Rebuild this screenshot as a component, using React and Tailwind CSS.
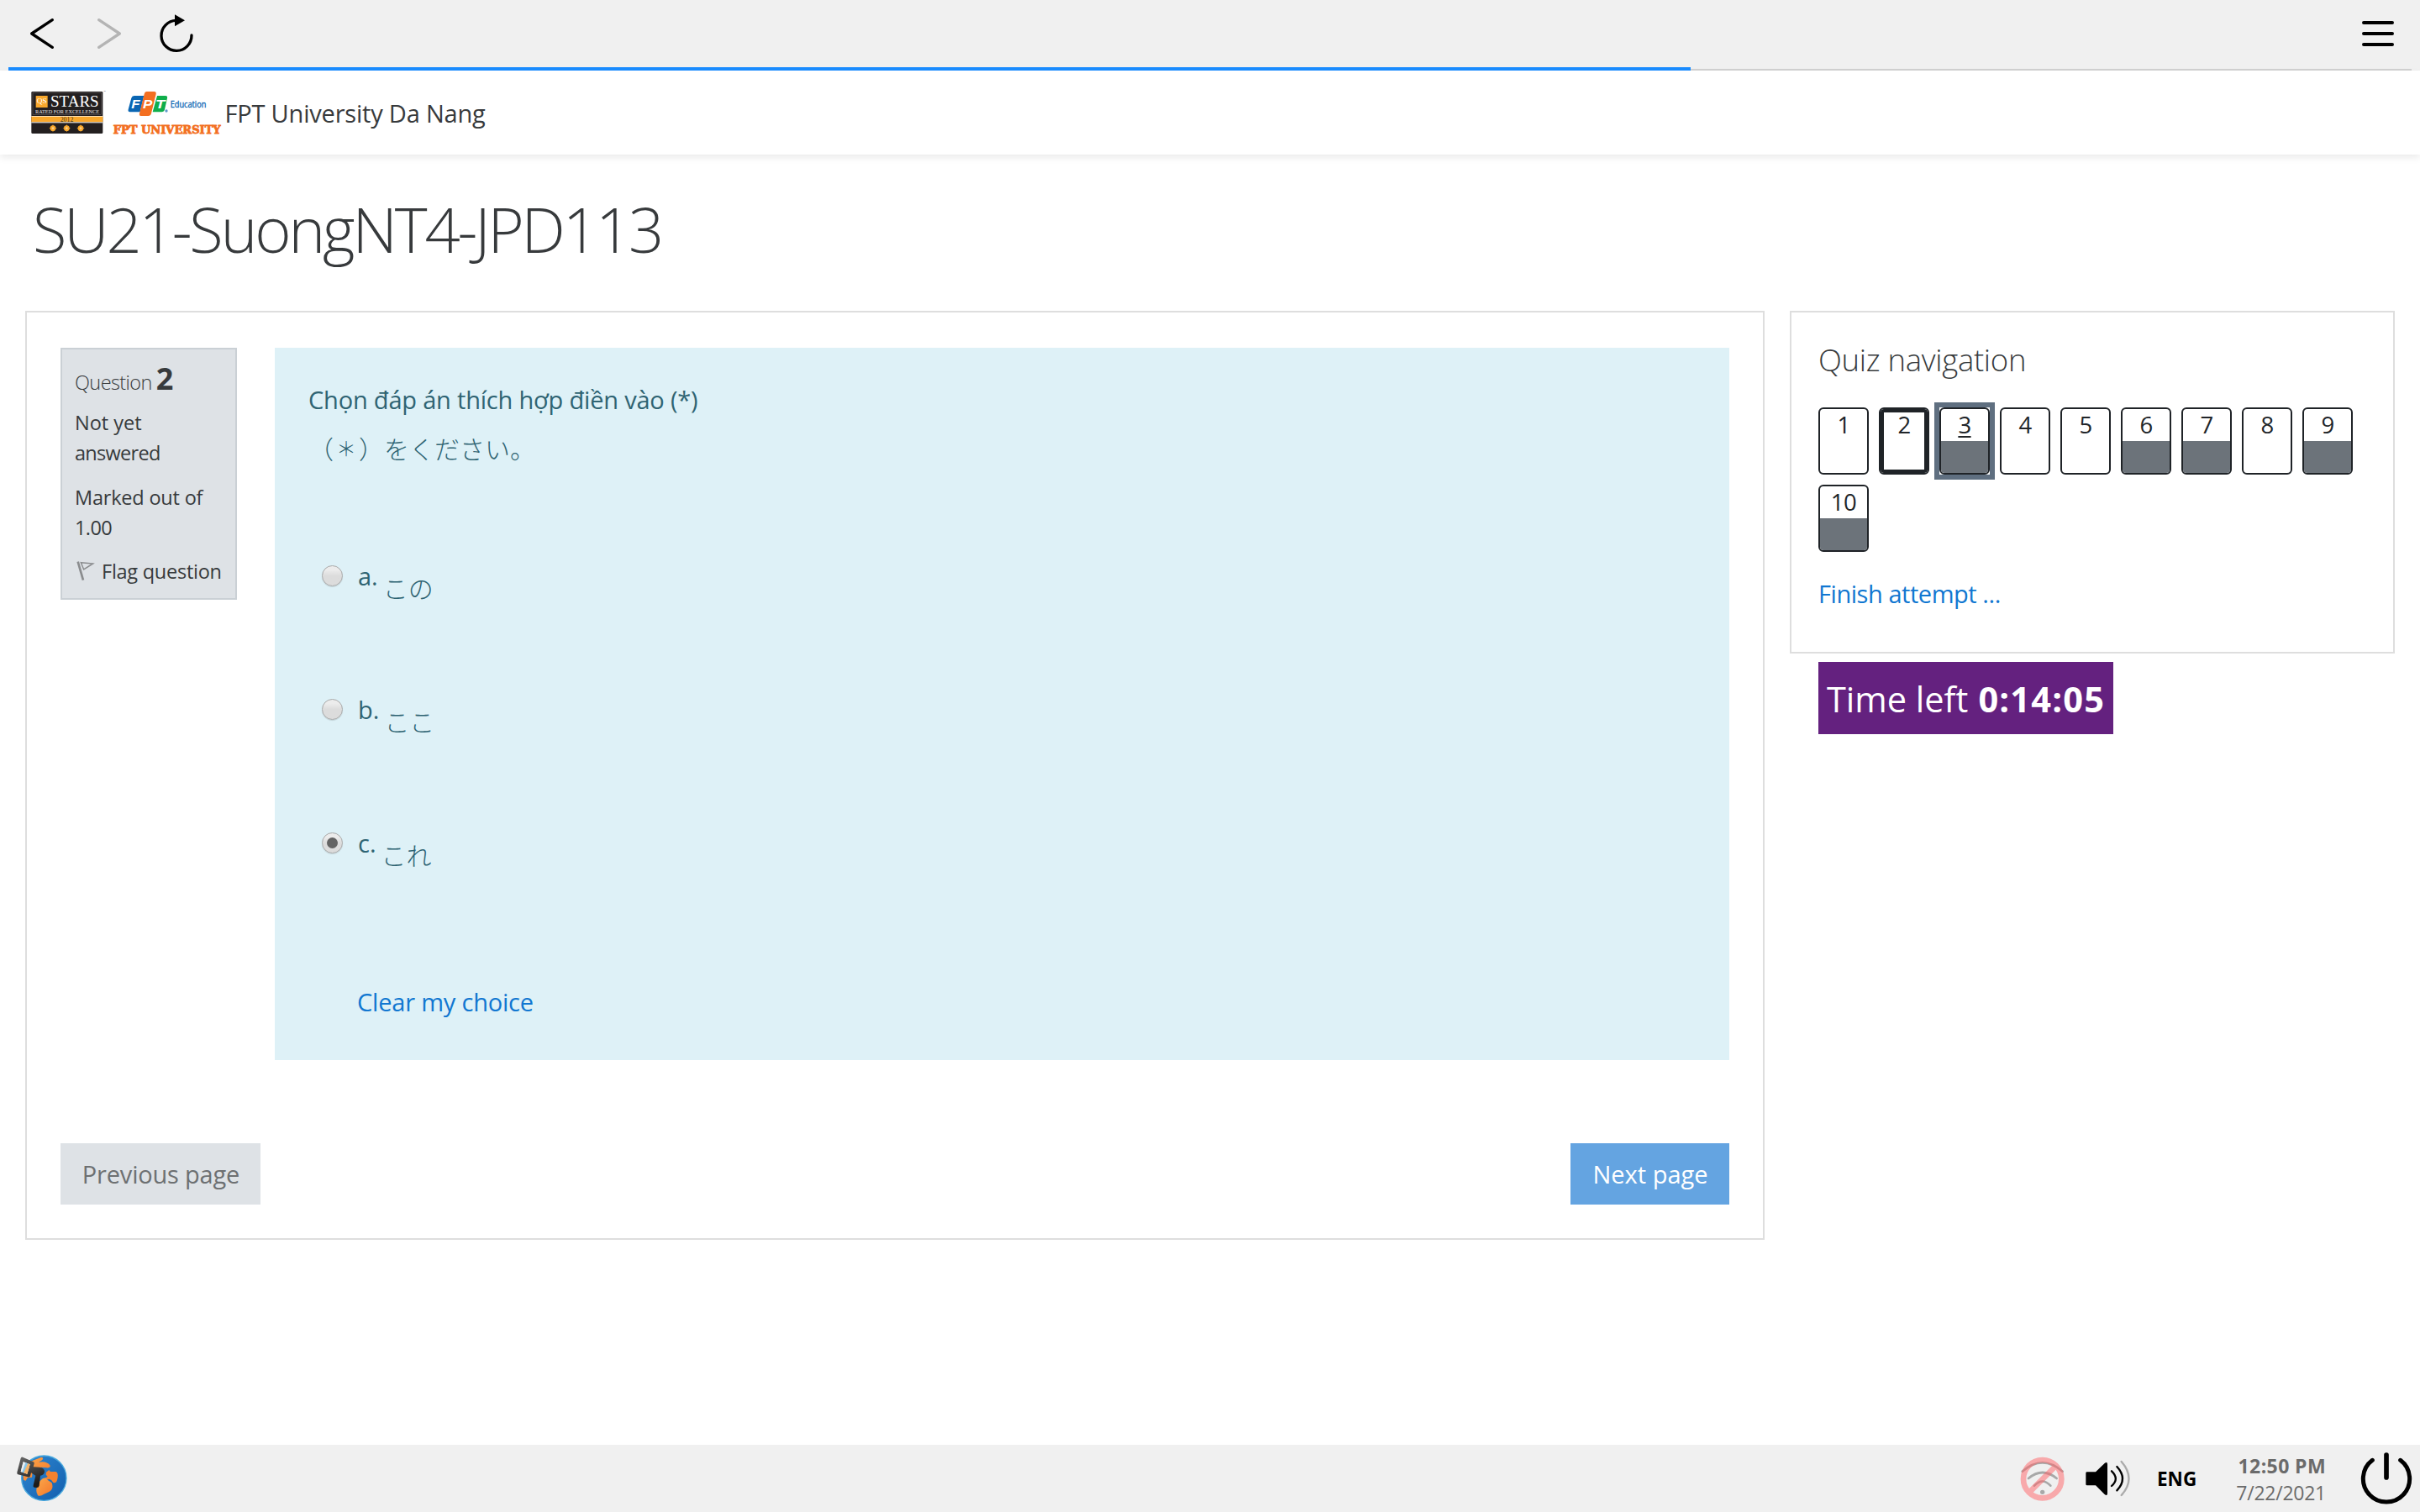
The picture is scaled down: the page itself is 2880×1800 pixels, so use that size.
import React from "react";

const JP = "font-['Noto_Sans_CJK_JP','Open_Sans',sans-serif] font-light";

function BackForwardReload() {
  return (
    <svg width="230" height="84" viewBox="0 0 690 252" fill="none" strokeLinecap="round" strokeLinejoin="round">
      <path d="M127 71 53 120l74 49" stroke="#000" strokeWidth="10" />
      <path d="M293 71l74 49-74 49" stroke="#b4b4b4" strokeWidth="10" />
      <path d="M624 126A54 54 0 1 1 569 73" stroke="#000" strokeWidth="10" />
      <path d="M564 52v42l36-21z" fill="#000" />
    </svg>
  );
}

function MenuIcon() {
  return (
    <svg width="38" height="30" viewBox="0 0 38 30" stroke="#000" strokeWidth="4" strokeLinecap="round">
      <path d="M2 2h34M2 15h34M2 28h34" />
    </svg>
  );
}

function BrandLogo() {
  return (
    <svg width="236" height="80" viewBox="0 0 708 240" className="shrink-0 overflow-visible">
      <rect x="22" y="45" width="255" height="150" rx="4" fill="#231f20" />
      <rect x="27" y="50" width="245" height="77" fill="none" stroke="#77706e" strokeWidth="1.5" />
      <rect x="38" y="60" width="42" height="42" fill="#f9a82c" />
      <text x="41" y="87" fontSize="25" fill="#fff" textLength="36" lengthAdjust="spacingAndGlyphs" fontFamily="Liberation Serif, serif">QS</text>
      <text x="90" y="98" fontSize="54" fill="#fff" textLength="173" lengthAdjust="spacingAndGlyphs" fontFamily="Liberation Serif, serif">STARS</text>
      <text x="36" y="122" fontSize="20" fill="#e8e4e2" textLength="228" lengthAdjust="spacingAndGlyphs" fontFamily="Liberation Serif, serif">RATED FOR EXCELLENCE</text>
      <rect x="22" y="132" width="255" height="3" fill="#fff" />
      <rect x="22" y="134" width="255" height="20" fill="#f9a82c" />
      <text x="125" y="153" fontSize="24" fill="#4a3412" textLength="47" lengthAdjust="spacingAndGlyphs" fontFamily="Liberation Serif, serif">2012</text>
      <rect x="22" y="154" width="255" height="3" fill="#fff" />
      {[99, 148, 198].map((x) => (
        <g key={x} fill="#f9a82c">
          <circle cx={x} cy="176" r="10" />
          <path d={`M${x} 162l4 10 10 4-10 4-4 10-4-10-10-4 10-4z`} />
          <circle cx={x} cy="176" r="4" fill="#fbd08a" />
        </g>
      ))}
      <text x="279" y="49" fontSize="9" fill="#555" fontFamily="Liberation Sans, sans-serif">™</text>
      <path d="M389 60h35l-14 58h-36q-8 0-6-9l11-41q2-8 10-8z" fill="#0a66b3" />
      <path d="M471 60h30q8 0 6 9l-9 40q-2 9-11 9h-32z" fill="#0fae4b" />
      <path d="M434 45h26q9 0 7 9l-17 69q-2 9-11 9h-26q-7 0-5-9l17-69q2-9 9-9z" fill="#f36f21" />
      <g fill="#fff" fontFamily="Liberation Sans, sans-serif" fontWeight="700" fontStyle="italic" fontSize="44">
        <text x="379" y="105" textLength="31" lengthAdjust="spacingAndGlyphs">F</text>
        <text x="420" y="105" textLength="34" lengthAdjust="spacingAndGlyphs">P</text>
        <text x="465" y="105" textLength="34" lengthAdjust="spacingAndGlyphs">T</text>
      </g>
      <circle cx="504" cy="114" r="5" fill="#5f97cb" />
      <text x="518" y="103" fontSize="31" fill="#0a66b3" stroke="#0a66b3" strokeWidth="1" textLength="128" lengthAdjust="spacingAndGlyphs" fontFamily="Open Sans, sans-serif">Education</text>
      <text x="314" y="195" fontSize="40" fontWeight="700" fill="#f36f21" stroke="#f36f21" strokeWidth="2.5" textLength="384" lengthAdjust="spacingAndGlyphs" fontFamily="DejaVu Serif, serif">FPT UNIVERSITY</text>
    </svg>
  );
}

function FlagIcon() {
  return (
    <svg width="31" height="28" viewBox="54 82 93 84" fill="none" stroke="#8a8c8e" strokeWidth="5">
      <path d="M65 90l19 66" strokeWidth="8" />
      <path d="M76 93l43 4-33 21z" strokeWidth="4.5" />
    </svg>
  );
}

function GlobeIcon() {
  return (
    <svg width="60" height="80" viewBox="60 60 180 240">
      <defs>
        <linearGradient id="sea" x1="0" y1="0" x2="1" y2="1">
          <stop offset="0" stopColor="#2f86d0" />
          <stop offset="1" stopColor="#125fae" />
        </linearGradient>
        <linearGradient id="metal" x1="0" y1="0" x2=".4" y2="1">
          <stop offset="0" stopColor="#6b6b6b" />
          <stop offset="1" stopColor="#1c1c1c" />
        </linearGradient>
        <linearGradient id="land" x1="0" y1="0" x2="1" y2="1">
          <stop offset="0" stopColor="#fba94c" />
          <stop offset="1" stopColor="#f4772a" />
        </linearGradient>
      </defs>
      <circle cx="157" cy="179" r="80" fill="url(#sea)" stroke="#49a9de" strokeWidth="4" />
      <path d="M84 186c-4-24 4-48 24-66l36-14c10-3 12 4 6 9l-12 7c18-4 34 0 41 12 2 7-6 9-13 8l-20-2-16 12-14 6-2 18-16 2-6 10z" fill="url(#land)" />
      <path d="M165 158l10-8 5 6 20 0q8 4 6 20t-8 19q-8 4-14-8l-8-5-10 3-4-6 8-6-6-6z" fill="#f5822f" />
      <path d="M131 202q10-12 22-22l10-2q6 10 22 18 8 22-10 32l-18 8q-10 8-20 6-10-10-6-28z" fill="url(#land)" />
      <path fillRule="evenodd" d="M81 104l38 17q4 2 3 6l-3 12 22 1q18 2 18 16-2 13-15 14l-4 36q-2 8-10 7l-8-1q-5-2-3-8l8-34-16-10-3 11q-2 6-8 4l-36-9q-4-2-3-8l13-50q2-6 7-4zm2 17l-9 35 23 8 10-34z" fill="url(#metal)" />
      <path d="M83 121l24 9-10 34-23-8z" fill="#e9eef2" />
      <path d="M99 127l8 3-10 34-13-4z" fill="#f8a74e" opacity=".85" />
      <path d="M91 124l8 3-14 33-6-2z" fill="#5eb3e2" opacity=".7" />
    </svg>
  );
}

function WifiOffIcon() {
  return (
    <svg width="54" height="80" viewBox="72 60 162 240" fill="none" strokeLinecap="round">
      <g stroke="#a8a8a8" strokeWidth="8">
        <path d="M80 155Q152 93 224 155" />
        <path d="M102 180Q152 138 203 180" />
        <path d="M123 206Q152 175 181 206" />
        <circle cx="152" cy="229" r="8" fill="#a8a8a8" stroke="none" />
      </g>
      <path d="M220 182a68 68 0 1 0-136 0a68 68 0 1 0 136 0zM105 230l95-95" stroke="#ff6266" strokeWidth="20" strokeLinecap="butt" opacity=".5" />
    </svg>
  );
}

function SpeakerIcon() {
  return (
    <svg width="56" height="80" viewBox="300 60 168 240" fill="none" strokeLinecap="round" strokeWidth="7">
      <path d="M311 157h31l32-31q10-8 10 4v103q0 12-10 4l-32-32h-31q-4 0-4-4v-40q0-4 4-4z" fill="#000" />
      <path d="M399 154Q428 181 399 207" stroke="#000" />
      <path d="M418 138Q458 181 418 223" stroke="#000" />
      <path d="M434 120Q487 181 434 240" stroke="#ababab" />
    </svg>
  );
}

function PowerIcon() {
  return (
    <svg width="64" height="80" viewBox="1284 60 192 240" fill="none" stroke="#000" strokeLinecap="round">
      <path d="M1330 115A83 83 0 1 0 1430 115" strokeWidth="15" />
      <path d="M1380 96v81" strokeWidth="17" />
    </svg>
  );
}

function Radio({ checked }) {
  return (
    <span className="mt-[10px] flex size-[25px] shrink-0 items-center justify-center rounded-full border-[1.5px] border-[#a9a9a9] bg-linear-to-b from-[#ececec] from-20% to-[#dcdcdc] to-50% shadow-[0_1px_1px_rgba(0,0,0,0.12)]">
      {checked && <span className="size-[12.5px] rounded-full bg-[#636363]" />}
    </span>
  );
}

const answers = [
  { letter: "a.", text: "この" },
  { letter: "b.", text: "ここ" },
  { letter: "c.", text: "これ", checked: true },
];

const questions = [
  { n: 1 },
  { n: 2, current: true },
  { n: 3, done: true, focused: true },
  { n: 4 },
  { n: 5 },
  { n: 6, done: true },
  { n: 7, done: true },
  { n: 8 },
  { n: 9, done: true },
  { n: 10, done: true },
];

function QuestionButton({ n, current, done, focused }) {
  return (
    <div className={focused ? "h-20 w-[60px] outline-[6px] outline-solid outline-[#5f6f80]" : "h-20 w-[60px]"}>
      <div className="flex h-full flex-col overflow-hidden rounded-[6px] border-2 border-[#1f2327] bg-white">
        <div
          className={
            current
              ? "h-full rounded-[3px] border-4 border-[#1f2327] text-center text-[27.5px] leading-[30px] tracking-[-0.5px] text-[#212529]"
              : "h-[38px] shrink-0 text-center text-[27.5px] leading-[38px] tracking-[-0.5px] text-[#212529]"
          }
        >
          {focused ? <span className="underline decoration-2 underline-offset-[3px]">{n}</span> : n}
        </div>
        {done && <div className="grow bg-[#6c737a]" />}
      </div>
    </div>
  );
}

function Toolbar() {
  return (
    <header className="h-[84px] bg-[#f0f0f0]">
      <div className="flex h-20 items-center justify-between pr-[31px] pl-5">
        <div className="h-20 overflow-hidden">
          <BackForwardReload />
        </div>
        <MenuIcon />
      </div>
      <div className="mx-[10px] flex h-1 items-end">
        <div className="h-1 w-[2002px] bg-[#1a8cff]" />
        <div className="h-0.5 grow bg-[#d0d0d0]" />
      </div>
    </header>
  );
}

function QuestionInfo() {
  return (
    <aside className="h-[300px] w-[210px] shrink-0 border-2 border-[#cad0d5] bg-[#dee2e6] px-[15px] pt-[8px] text-[23.5px] leading-[36px] whitespace-nowrap text-[#373a3c]">
      <div className="flex h-[54px] items-baseline leading-[54px]">
        <span className="font-light tracking-[-0.6px]">Question</span>
        <span className="ml-[5px] text-[36px] font-bold tracking-[-1px]">2</span>
      </div>
      <div className="mt-[7px]">Not yet</div>
      <div className="tracking-[-0.7px]">answered</div>
      <div className="mt-[17px] tracking-[-0.2px]">Marked out of</div>
      <div className="tracking-[-0.6px]">1.00</div>
      <div className="mt-4 flex items-center">
        <FlagIcon />
        <span className="pl-[1px] tracking-[-0.25px]">Flag question</span>
      </div>
    </aside>
  );
}

function QuizCard() {
  return (
    <section className="w-[2070px] border-2 border-[#dedede] px-10 pt-[42px] pb-10">
      <div className="flex gap-[45px]">
        <QuestionInfo />
        <div className="h-[848px] grow bg-[#def1f7] pt-[39px] pl-[40px] leading-[45px] text-[#2f6473]">
          <p className="tracking-[-0.2px]">Chọn đáp án thích hợp điền vào (*)</p>
          <p className={`${JP} mt-[13px] flex h-[45px] text-[30px]`}>
            <span>（</span>
            <span className="w-[30px] text-center text-[24px] leading-[44px]">＊</span>
            <span>）をください。</span>
          </p>
          <div className="mt-[107px] pl-[16px]">
            {answers.map((a) => (
              <div key={a.letter} className="flex h-[159px] items-start">
                <Radio checked={a.checked} />
                <span className="ml-[18px]">{a.letter}</span>
                <span className={`${JP} mt-[14px] ml-[6px] text-[30px]`}>{a.text}</span>
              </div>
            ))}
          </div>
          <a className="mt-[30px] ml-[58px] block tracking-[-0.2px] text-[#1177d1]">Clear my choice</a>
        </div>
      </div>
      <div className="mt-[99px] flex justify-between leading-[73px]">
        <button className="h-[73px] w-[238px] bg-[#dee2e6] pl-[1px] tracking-[-0.2px] text-[#6d7072]">Previous page</button>
        <button className="h-[73px] w-[189px] bg-[#64a4e1] pl-[1px] text-white">Next page</button>
      </div>
    </section>
  );
}

function NavigationPanel() {
  return (
    <div className="w-[720px]">
      <section className="h-[408px] border-2 border-[#dedede] px-8 pt-[34px] leading-[45px]">
        <h2 className="text-[36.5px] font-light tracking-[-0.3px] text-[#373a3c]">Quiz navigation</h2>
        <div className="mt-[34px] flex flex-wrap gap-3">
          {questions.map((q) => (
            <QuestionButton key={q.n} {...q} />
          ))}
        </div>
        <a className="mt-[27px] block tracking-[-0.45px] text-[#1177d1]">Finish attempt ...</a>
      </section>
      <div className="mt-[10px] ml-[34px] flex h-[86px] w-[351px] items-center gap-[12px] bg-[#64217f] pt-[4px] pl-[10px] text-[41.5px] leading-none whitespace-nowrap text-white">
        <span>Time left</span>
        <span className="font-bold tracking-[1.2px]">0:14:05</span>
      </div>
    </div>
  );
}

function Taskbar() {
  return (
    <footer className="mt-auto flex h-20 items-center bg-[#f0f0f0] pr-2 pl-5">
      <GlobeIcon />
      <div className="ml-auto flex items-center">
        <WifiOffIcon />
        <div className="ml-[22px]">
          <SpeakerIcon />
        </div>
        <div className="ml-[31px] w-[50px] pt-[2px] text-[22.5px] leading-8 font-bold text-black">ENG</div>
        <div className="mr-[40px] ml-[40px] w-[111px] pt-[2px] text-right text-[23px] leading-8 whitespace-nowrap text-[#6b6b6b]">
          <div className="font-bold tracking-[0.4px]">12:50 PM</div>
          <div className="tracking-[-0.25px]">7/22/2021</div>
        </div>
        <PowerIcon />
      </div>
    </footer>
  );
}

export default function App() {
  return (
    <div className="flex h-[1800px] w-[2880px] flex-col overflow-hidden bg-white font-['Open_Sans','Noto_Sans',sans-serif] text-[29px] text-[#373a3c]">
      <Toolbar />
      <nav className="flex h-[100px] items-center bg-white pl-[30px] shadow-[0_4px_8px_rgba(0,0,0,0.08)]">
        <BrandLogo />
        <span className="pt-[2px] pl-[1.5px] tracking-[-0.2px]">FPT University Da Nang</span>
      </nav>
      <h1 className="mt-[44px] mb-[52px] ml-[39px] text-[74px] leading-[90px] font-light tracking-[-3.1px]">SU21-SuongNT4-JPD113</h1>
      <main className="flex items-start gap-[30px] px-[30px]">
        <QuizCard />
        <NavigationPanel />
      </main>
      <Taskbar />
    </div>
  );
}
